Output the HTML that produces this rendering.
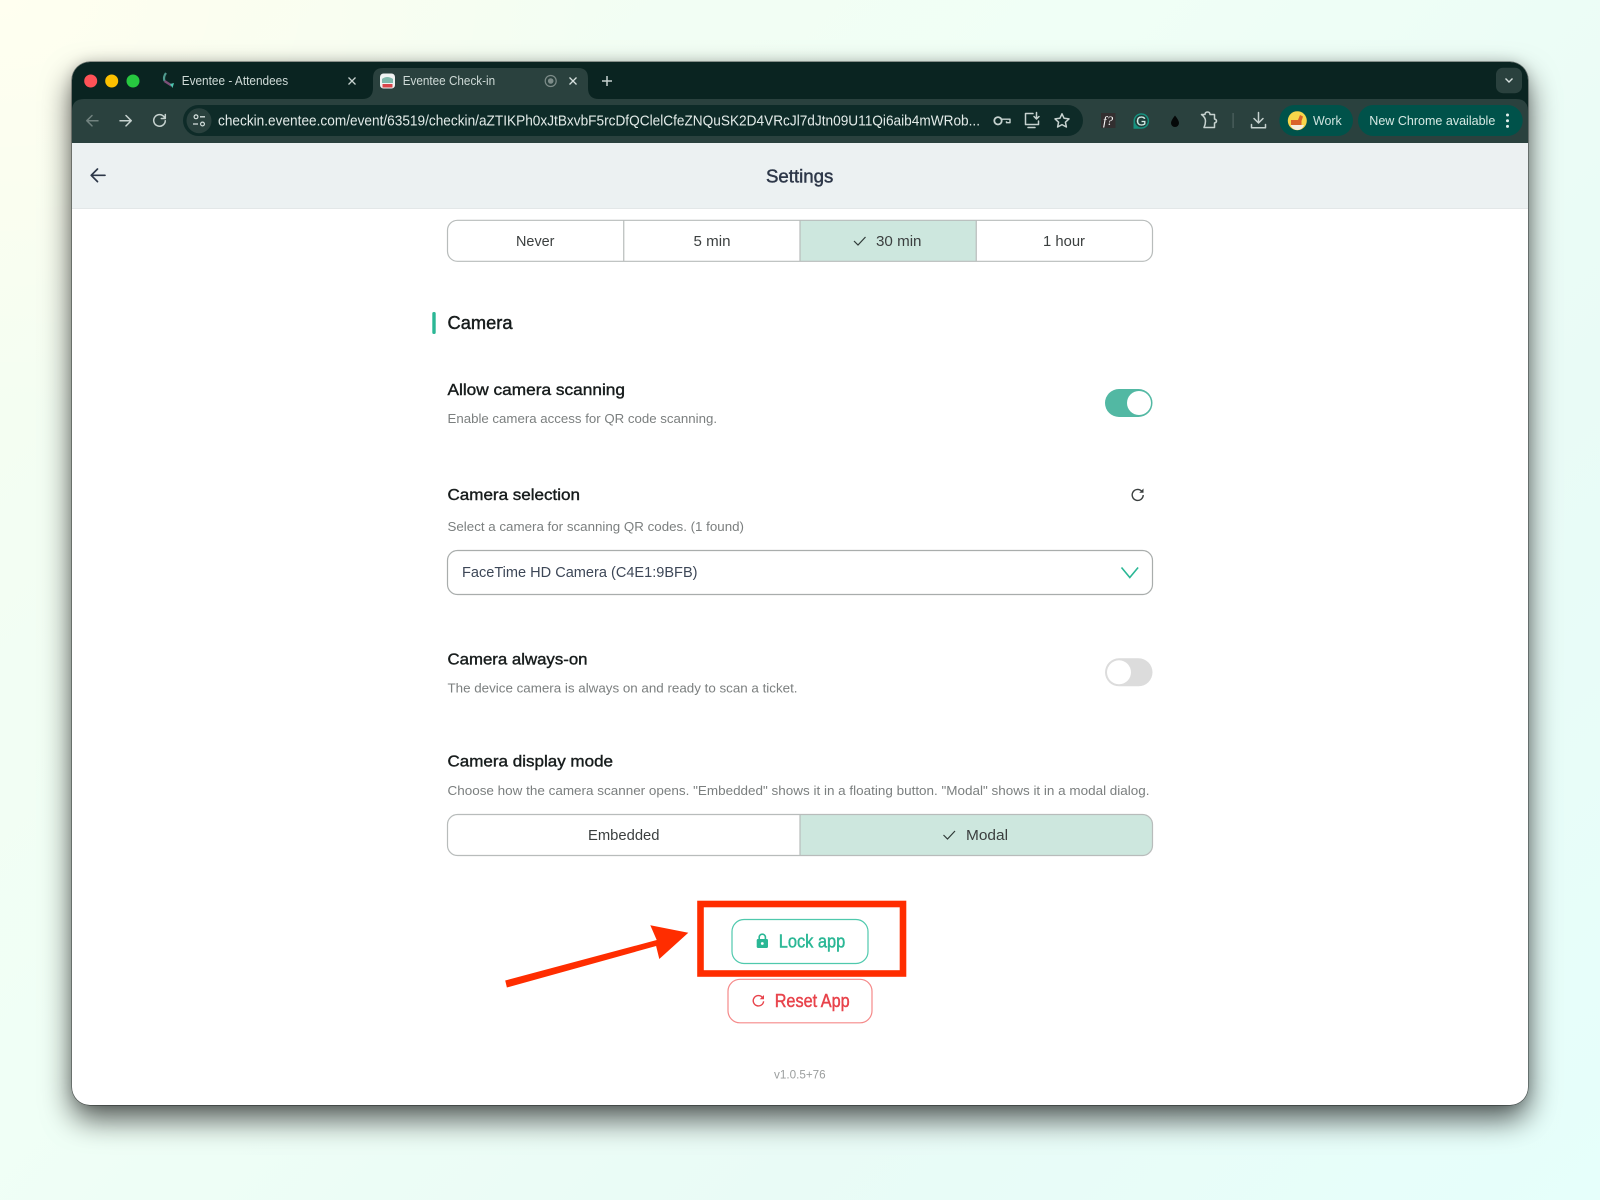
<!DOCTYPE html>
<html lang="en">
<head>
<meta charset="utf-8">
<title>Eventee Check-in Settings</title>
<style>
html,body{margin:0;padding:0;width:1600px;height:1200px;overflow:hidden}
body{position:relative;background:#eefdf7}
.bg{position:absolute;inset:0;background:
  radial-gradient(600px 420px at 0 0,#fffff0 0,rgba(255,255,240,0) 100%),
  linear-gradient(135deg,#f6fdf0 0,#f0fff6 40%,#e9fbf6 70%,#e6fffb 100%)}
.win{position:absolute;left:72px;top:62px;width:1456px;height:1043px;border-radius:18px;background:#fff;
  box-shadow:0 14px 30px rgba(0,0,0,.66),0 0 12px rgba(0,0,0,.14),0 0 0 .6px rgba(60,70,68,.7)}
svg{position:absolute;left:0;top:0;filter:blur(.25px)}
text{font-family:"Liberation Sans",sans-serif}
.t{fill:#cfdad7;font-size:12.5px}
.h{fill:#171c1c;font-size:16px;stroke:#171c1c;stroke-width:.4px}
.d{fill:#7b7f7f;font-size:12.5px}
.s{fill:#3b3f3f;font-size:14.5px;text-anchor:start}
.i{fill:none;stroke:#c6d2cf;stroke-width:1.5;stroke-linecap:round;stroke-linejoin:round}
</style>
</head>
<body>
<div class="bg"></div>
<div class="win"></div>
<svg width="1600" height="1200" viewBox="0 0 1600 1200" xmlns="http://www.w3.org/2000/svg">
<defs><clipPath id="w"><rect x="72" y="62" width="1456" height="1043" rx="18"/></clipPath></defs>
<g clip-path="url(#w)">
  <rect x="72" y="62" width="1456" height="38" fill="#0a2421"/>
  <rect x="72" y="99" width="1456" height="44" fill="#2a413e"/>
  <rect x="72" y="143" width="1456" height="66" fill="#ecf1f2"/>
  <rect x="72" y="208" width="1456" height="1" fill="#e3e7e8"/>
  <!-- active tab -->
  <path d="M362 99q11 0 11-11v-10q0-10 10-10h195q10 0 10 10v10q0 11 11 11z" fill="#2a413e"/>
  <!-- rounded toolbar corners -->
  <path d="M72 99h12q-12 0-12 12z" fill="#0a2421"/>
  <path d="M1528 99h-12q12 0 12 12z" fill="#0a2421"/>
</g>
<!-- traffic lights -->
<circle cx="90.7" cy="81" r="6.5" fill="#ff5257"/>
<circle cx="111.7" cy="81" r="6.5" fill="#fdc100"/>
<circle cx="133" cy="81" r="6.5" fill="#27c840"/>
<!-- tab 1 -->
<path d="M166 73q-3 4-1.5 8" fill="none" stroke="#4f9b8f" stroke-width="2.2"/>
<path d="M164.5 81l7 4.5" fill="none" stroke="#7d4f78" stroke-width="2.4"/>
<path d="M170 84l2.500 4 1.500-5z" fill="#4fc7b1"/>
<text class="t" x="181.7" y="85" textLength="106.5" lengthAdjust="spacingAndGlyphs">Eventee - Attendees</text>
<path d="M348.5 77.5l7 7M355.5 77.5l-7 7" stroke="#c6d2cf" stroke-width="1.3" fill="none"/>
<!-- tab 2 -->
<rect x="380" y="73.5" width="15" height="15" rx="3.5" fill="#f0f2f2"/>
<path d="M382 79q5-4 11 0v4h-11z" fill="#7fb8ab"/>
<rect x="382.500" y="84" width="10" height="3.5" fill="#d8454a"/>
<text class="t" x="402.7" y="85" textLength="92.5" lengthAdjust="spacingAndGlyphs">Eventee Check-in</text>
<circle cx="550.7" cy="81" r="5.5" fill="none" stroke="#7d8c89" stroke-width="1.2"/>
<circle cx="550.7" cy="81" r="2.8" fill="#7d8c89"/>
<path d="M569.5 77.5l7 7M576.5 77.500l-7 7" stroke="#d6e0de" stroke-width="1.3" fill="none"/>
<path d="M602 81h10M607 76v10" stroke="#c6d2cf" stroke-width="1.5" fill="none"/>
<!-- tab list button -->
<rect x="1496" y="67.7" width="26" height="25.5" rx="7" fill="#2a413e"/>
<path d="M1505.5 78.500l3.500 3.500 3.500-3.500" stroke="#d6e0de" stroke-width="1.4" fill="none"/>
<!-- nav -->
<path class="i" style="stroke:#71827f" d="M98 120.7H87M92 115.5l-5.200 5.200 5.200 5.200"/>
<path class="i" d="M120 120.7h11M126 115.5l5.200 5.200-5.200 5.200"/>
<path class="i" d="M164.500 117.5a5.800 5.800 0 1 0 .8 3.200M165.3 114.5v4h-4"/>
<!-- omnibox -->
<rect x="183" y="105" width="900" height="31" rx="15.5" fill="#0e2b28"/>
<circle cx="199" cy="120.7" r="12.5" fill="#2a413e"/>
<circle cx="196" cy="116.8" r="1.9" fill="none" stroke="#d6e0de" stroke-width="1.2"/>
<path d="M200 116.8h5M193 124h5" stroke="#d6e0de" stroke-width="1.3"/>
<circle cx="202.5" cy="124" r="1.9" fill="none" stroke="#d6e0de" stroke-width="1.2"/>
<text x="218" y="125.5" font-size="14.5" fill="#e3ebe9" textLength="762" lengthAdjust="spacingAndGlyphs">checkin.eventee.com/event/63519/checkin/aZTIKPh0xJtBxvbF5rcDfQClelCfeZNQuSK2D4VRcJl7dJtn09U11Qi6aib4mWRob...</text>
<!-- key -->
<circle cx="998" cy="120.8" r="3.7" fill="none" stroke="#c6d2cf" stroke-width="1.8"/>
<path d="M1001.500 119.200h8.500v3.500h-3.500v-1.500" fill="none" stroke="#c6d2cf" stroke-width="1.4" stroke-linejoin="round"/>
<!-- install -->
<path class="i" d="M1033 113.500h-7.500v11h13v-3.500M1028 127.500h7M1036.500 112.500v6M1034 116.500l2.500 2.500 2.500-2.500"/>
<!-- star -->
<path class="i" d="M1062 113.800l2.100 4.500 4.900.6-3.600 3.300 1 4.800-4.400-2.400-4.400 2.400 1-4.800-3.600-3.300 4.900-.6z"/>
<!-- f? -->
<rect x="1101" y="113" width="14.5" height="15" fill="#332f30"/>
<text x="1103" y="125" font-size="13" font-style="italic" fill="#ffffff" style="font-family:'Liberation Serif',serif">f?</text>
<!-- G -->
<path d="M1141.300 113.200a7.800 7.800 0 1 1 0 15.600h-7.800v-7.800a7.800 7.800 0 0 1 7.800-7.800z" fill="#16917f"/>
<circle cx="1141.300" cy="121" r="6.300" fill="#1f3f3b"/>
<text x="1136.300" y="125.600" font-size="13" fill="#d6efe9" stroke="#d6efe9" stroke-width=".2">G</text>
<!-- droplet -->
<path d="M1175 115.500q4 5 4 7.500a4 4 0 0 1-8 0q0-2.500 4-7.500z" fill="#050808"/>
<!-- puzzle -->
<path class="i" stroke-width="1.3" transform="translate(-2 0)" d="M1203.500 114.500h3.500q0-2.500 2.500-2.500t2.500 2.500h4.500v4.500q2 .5 2 2t-2 2v4.500h-10.500q1.500-3 1.500-6.500t-4-6.500z"/>
<rect x="1232.500" y="113" width="1.2" height="15" fill="#4f6360"/>
<!-- download -->
<path class="i" transform="translate(.5 0)" d="M1258 112.500v10M1253.500 118.500l4.500 4.500 4.500-4.500M1251 124.500v3.200h14v-3.200"/>
<!-- pills -->
<rect x="1279.3" y="105" width="73.7" height="31" rx="15.5" fill="#00524a"/>
<circle cx="1297.300" cy="120.700" r="9.500" fill="#f7d64a"/>
<path d="M1291 120h7l2-5 3 1.500-1.500 4.500v4h-10.500z" fill="#d9622b"/>
<path d="M1290.500 125h13.500q-2 5-6.700 5t-6.800-5z" fill="#f5eee0"/>
<text x="1313" y="125" font-size="12.5" fill="#cfe4df" textLength="28.7" lengthAdjust="spacingAndGlyphs">Work</text>
<rect x="1358" y="105" width="164.700" height="31" rx="15.5" fill="#00524a"/>
<text x="1369.300" y="125" font-size="12.5" fill="#d6e9e4" textLength="126" lengthAdjust="spacingAndGlyphs">New Chrome available</text>
<circle cx="1507.5" cy="115" r="1.5" fill="#e0ece9"/><circle cx="1507.5" cy="120.7" r="1.5" fill="#e0ece9"/><circle cx="1507.5" cy="126.4" r="1.5" fill="#e0ece9"/>
<!-- header -->
<path d="M105 175.300H91.500M97.500 169l-6.300 6.300 6.300 6.300" fill="none" stroke="#2d3748" stroke-width="1.7" stroke-linecap="round" stroke-linejoin="round"/>
<text x="766" y="182.300" font-size="18" fill="#2d3748" stroke="#2d3748" stroke-width=".45" textLength="67.300" lengthAdjust="spacingAndGlyphs">Settings</text>
<!-- segment 1 -->
<rect x="800" y="220.500" width="176.250" height="40.500" fill="#cde7de"/>
<rect x="447.500" y="220.300" width="705" height="41" rx="10" fill="none" stroke="#b8bcbb" stroke-width="1.2"/>
<path d="M623.750 220.500v41M800 220.500v41M976.250 220.500v41" stroke="#b8bcbb" stroke-width="1.2"/>
<text class="s" x="516" y="246" textLength="38.5" lengthAdjust="spacingAndGlyphs">Never</text>
<text class="s" x="693.500" y="246" textLength="37" lengthAdjust="spacingAndGlyphs">5 min</text>
<path d="M854 241l4 4 7.500-8" fill="none" stroke="#2f3a38" stroke-width="1.2"/>
<text class="s" x="876" y="246" textLength="45.500" lengthAdjust="spacingAndGlyphs">30 min</text>
<text class="s" x="1043" y="246" textLength="42" lengthAdjust="spacingAndGlyphs">1 hour</text>
<!-- camera heading -->
<rect x="432.300" y="312" width="3.400" height="22" rx="1.500" fill="#2ab795"/>
<text x="447.500" y="329" font-size="18" fill="#171c1c" stroke="#171c1c" stroke-width=".45" textLength="65" lengthAdjust="spacingAndGlyphs">Camera</text>
<!-- allow -->
<text class="h" x="447.500" y="395" textLength="177.500" lengthAdjust="spacingAndGlyphs">Allow camera scanning</text>
<text class="d" x="447.500" y="423" textLength="269.500" lengthAdjust="spacingAndGlyphs">Enable camera access for QR code scanning.</text>
<rect x="1105" y="389" width="47.500" height="28" rx="14" fill="#52b8a3"/>
<circle cx="1139" cy="403" r="12" fill="#fff"/>
<!-- selection -->
<text class="h" x="447.500" y="500" textLength="132.500" lengthAdjust="spacingAndGlyphs">Camera selection</text>
<g transform="translate(-4 0)">
<path d="M1146 491.500a5.500 5.500 0 1 0 1.200 3.500" fill="none" stroke="#3a3f3f" stroke-width="1.4"/>
<path d="M1147.500 488.500v4.200h-4.200z" fill="#3a3f3f"/>
</g>
<text class="d" x="447.500" y="531" textLength="296.500" lengthAdjust="spacingAndGlyphs">Select a camera for scanning QR codes. (1 found)</text>
<rect x="447.500" y="550.500" width="705" height="44" rx="10" fill="#fff" stroke="#a9adac" stroke-width="1.2"/>
<text x="462" y="577" font-size="14.500" fill="#3d4757" textLength="235.500" lengthAdjust="spacingAndGlyphs">FaceTime HD Camera (C4E1:9BFB)</text>
<path d="M1121.500 567.500l8.300 10 8.300-10" fill="none" stroke="#2ab795" stroke-width="1.6"/>
<!-- always on -->
<text class="h" x="447.500" y="664.700" textLength="140" lengthAdjust="spacingAndGlyphs">Camera always-on</text>
<text class="d" x="447.500" y="692.300" textLength="350" lengthAdjust="spacingAndGlyphs">The device camera is always on and ready to scan a ticket.</text>
<rect x="1105" y="658.300" width="47.500" height="28" rx="14" fill="#dcdcdc"/>
<circle cx="1119" cy="672.300" r="12" fill="#fff"/>
<!-- display mode -->
<text class="h" x="447.500" y="766.700" textLength="165.500" lengthAdjust="spacingAndGlyphs">Camera display mode</text>
<text class="d" x="447.500" y="795" textLength="702" lengthAdjust="spacingAndGlyphs">Choose how the camera scanner opens. "Embedded" shows it in a floating button. "Modal" shows it in a modal dialog.</text>
<path d="M800 814.500h342.500a10 10 0 0 1 10 10v21a10 10 0 0 1-10 10H800z" fill="#cde7de"/>
<rect x="447.500" y="814.500" width="705" height="41" rx="10" fill="none" stroke="#b8bcbb" stroke-width="1.2"/>
<path d="M800 814.500v41" stroke="#b8bcbb" stroke-width="1.2"/>
<text class="s" x="588" y="840" textLength="71.500" lengthAdjust="spacingAndGlyphs">Embedded</text>
<path d="M943.500 835l4 4 7.500-8" fill="none" stroke="#2f3a38" stroke-width="1.2"/>
<text class="s" x="966" y="840" textLength="42" lengthAdjust="spacingAndGlyphs">Modal</text>
<!-- lock button -->
<rect x="732" y="919.500" width="136" height="44" rx="12" fill="#fff" stroke="#4fc9ad" stroke-width="1.2"/>
<path d="M759.200 939.500v-2.200a3.100 3.100 0 0 1 6.200 0v2.200" fill="none" stroke="#2ab795" stroke-width="1.6"/>
<rect x="756.700" y="939" width="11.300" height="9" rx="1.200" fill="#2ab795"/>
<circle cx="762.300" cy="943.500" r="1.400" fill="#fff"/>
<text x="778.700" y="947.700" font-size="18" fill="#2ab795" stroke="#2ab795" stroke-width=".45" textLength="66.600" lengthAdjust="spacingAndGlyphs">Lock app</text>
<!-- reset -->
<rect x="728" y="979.300" width="144" height="43.500" rx="12" fill="#fff" stroke="#f58a8a" stroke-width="1.2"/>
<path d="M762.500 997.500a5.200 5.200 0 1 0 1.100 3.800" fill="none" stroke="#e8434b" stroke-width="1.4"/>
<path d="M764 995v4.300h-4.300z" fill="#e8434b"/>
<text x="774.700" y="1007" font-size="18" fill="#e8434b" stroke="#e8434b" stroke-width=".45" textLength="75" lengthAdjust="spacingAndGlyphs">Reset App</text>
<text x="774" y="1078.700" font-size="11.500" fill="#9b9e9e" textLength="51.700" lengthAdjust="spacingAndGlyphs">v1.0.5+76</text>
<!-- annotation -->
<rect x="700.500" y="904" width="202.500" height="69.500" fill="none" stroke="#ff2d00" stroke-width="6.600"/>
<path d="M505.200 980.500l151.500-40.500-6.400-14.700 38 7.400-29 26.300-3.200-13-149.200 41.500z" fill="#ff2d00"/>
</svg>
</body>
</html>
